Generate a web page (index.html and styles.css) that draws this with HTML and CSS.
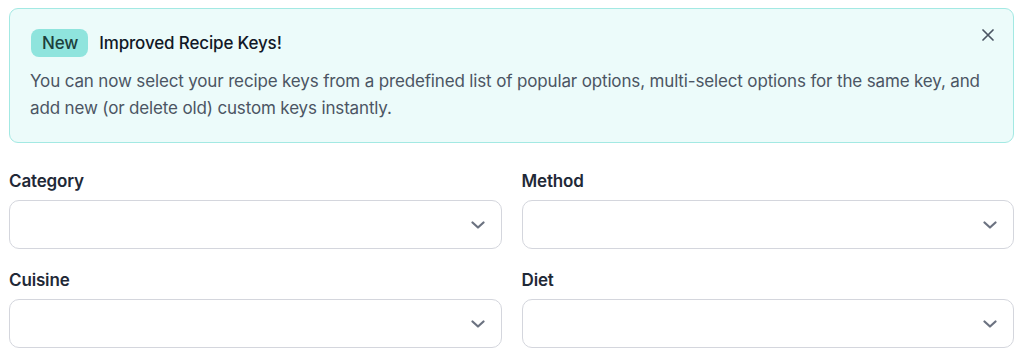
FILE: index.html
```html
<!DOCTYPE html>
<html lang="en">
<head>
<meta charset="utf-8">
<title>Recipe Keys</title>
<link rel="stylesheet" href="styles.css">
</head>
<body>
<div class="page">
  <div class="banner">
    <div class="banner-head">
      <span class="badge">New</span>
      <span class="banner-title">Improved Recipe Keys!</span>
      <button class="close" aria-label="Close">
        <svg width="12" height="12" viewBox="0 0 12 12"><path d="M1 1L11 11M11 1L1 11" stroke="#4b5563" stroke-width="1.7" stroke-linecap="round" fill="none"/></svg>
      </button>
    </div>
    <p class="banner-text">You can now select your recipe keys from a predefined list of popular options, multi-select options for the same key, and add new (or delete old) custom keys instantly.</p>
  </div>
  <div class="fields">
    <div class="field">
      <label class="label">Category</label>
      <div class="select"><svg class="chev" width="14" height="8" viewBox="0 0 14 8"><path d="M1.5 1.5L7 6.5L12.5 1.5" stroke="#6b7280" stroke-width="2.2" stroke-linecap="round" stroke-linejoin="round" fill="none"/></svg></div>
    </div>
    <div class="field">
      <label class="label">Method</label>
      <div class="select"><svg class="chev" width="14" height="8" viewBox="0 0 14 8"><path d="M1.5 1.5L7 6.5L12.5 1.5" stroke="#6b7280" stroke-width="2.2" stroke-linecap="round" stroke-linejoin="round" fill="none"/></svg></div>
    </div>
    <div class="field">
      <label class="label">Cuisine</label>
      <div class="select"><svg class="chev" width="14" height="8" viewBox="0 0 14 8"><path d="M1.5 1.5L7 6.5L12.5 1.5" stroke="#6b7280" stroke-width="2.2" stroke-linecap="round" stroke-linejoin="round" fill="none"/></svg></div>
    </div>
    <div class="field">
      <label class="label">Diet</label>
      <div class="select"><svg class="chev" width="14" height="8" viewBox="0 0 14 8"><path d="M1.5 1.5L7 6.5L12.5 1.5" stroke="#6b7280" stroke-width="2.2" stroke-linecap="round" stroke-linejoin="round" fill="none"/></svg></div>
    </div>
  </div>
</div>
</body>
</html>
```
FILE: styles.css
```css
* { box-sizing: border-box; }
html, body { margin: 0; background: #ffffff; }
body {
  font-family: Inter, "Noto Sans", "Liberation Sans", sans-serif;
  font-size: 17px;
  letter-spacing: -0.15px;
  color: #1f2937;
}
.page {
  padding: 8px 10px 0 9px;
}
.banner {
  background: #ecfbfa;
  border: 1px solid #a3e9e3;
  border-radius: 9px;
  padding: 20px;
}
.banner-head {
  display: flex;
  align-items: center;
  height: 28px;
}
.badge {
  background: #8fe4dd;
  color: #1d3f3c;
  font-weight: 500;
  border-radius: 8px;
  height: 28px;
  padding: 0 10px 0 11px;
  margin-left: 1px;
  display: inline-flex;
  align-items: center;
  line-height: 1;
}
.banner-title {
  font-weight: 500;
  color: #111827;
  flex: 1;
  margin-left: 11px;
}
.close {
  border: 0;
  background: transparent;
  padding: 0;
  width: 12px;
  height: 12px;
  display: block;
  align-self: flex-start;
  margin: 0 -1px 0 0;
}
.close svg { display: block; }
.banner-text {
  margin: 11px 0 0 0;
  line-height: 27px;
  color: #4b5563;
}
.fields {
  display: grid;
  grid-template-columns: 1fr 1fr;
  column-gap: 20px;
  row-gap: 19px;
  margin-top: 26px;
}
.field {
  display: flex;
  flex-direction: column;
}
.label {
  font-weight: 600;
  line-height: 24px;
  margin-bottom: 7px;
  color: #1f2937;
}
.select {
  height: 49px;
  border: 1px solid #d4d6dd;
  border-radius: 10px;
  background: #fff;
  display: flex;
  align-items: center;
  justify-content: flex-end;
  padding-right: 16px;
}
.chev { display: block; }
```
